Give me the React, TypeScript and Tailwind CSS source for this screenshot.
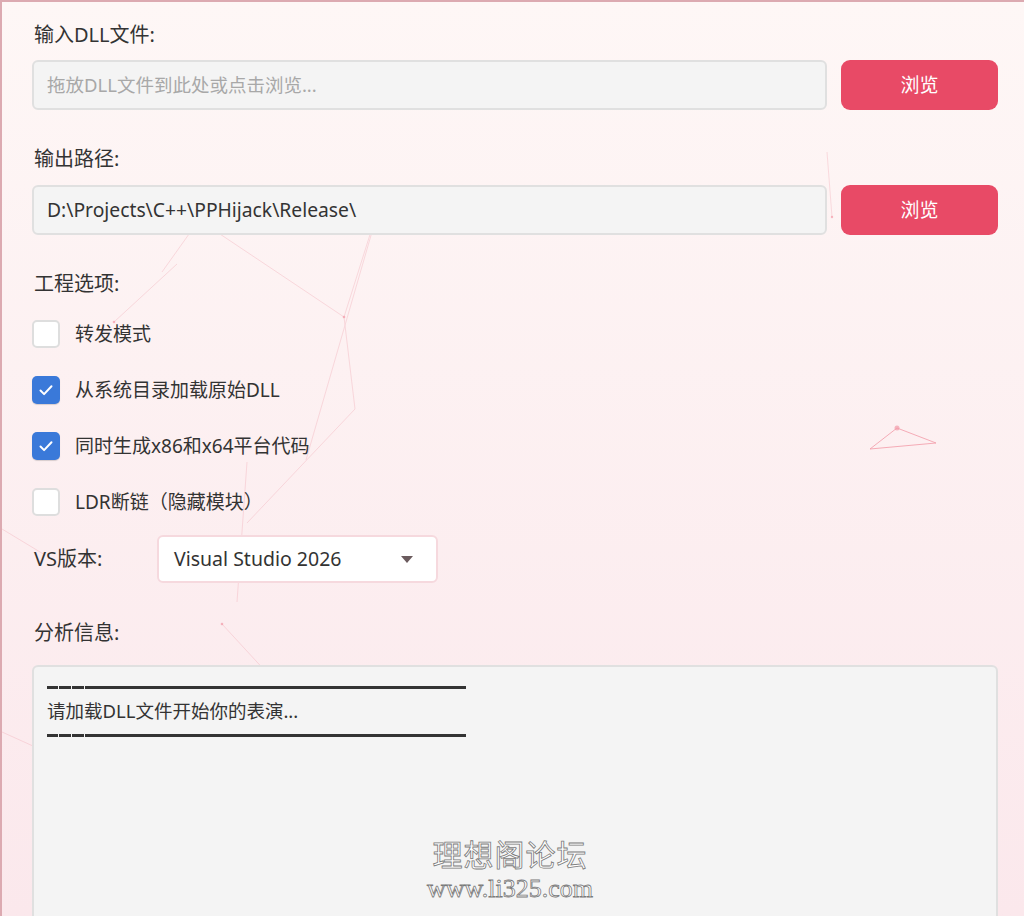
import React from "react";

const font = { fontFamily: '"Noto Sans", "Noto Sans CJK SC", sans-serif' };

function Check({ on }: { on: boolean }) {
  return on ? (
    <div className="w-[28px] h-[28px] rounded-[5px] bg-[#3a79d9] flex items-center justify-center shadow-[0_1px_1px_rgba(0,0,0,0.15)]">
      <svg width="18" height="18" viewBox="0 0 18 18" fill="none">
        <path d="M3.5 9.5l3.6 3.6L14.5 5.2" stroke="#fff" strokeWidth="2" strokeLinecap="round" strokeLinejoin="round" />
      </svg>
    </div>
  ) : (
    <div className="w-[28px] h-[28px] rounded-[5px] bg-white border-2 border-[#dedede]" />
  );
}

function Bar() {
  return (
    <div className="flex items-center gap-[1px] h-[24px]">
      <span className="w-[11px] h-[3px] bg-[#333]" />
      <span className="w-[12px] h-[3px] bg-[#333]" />
      <span className="w-[12px] h-[3px] bg-[#333]" />
      <span className="w-[381px] h-[3px] bg-[#333]" />
    </div>
  );
}

export default function App() {
  const options = [
    { label: "转发模式", on: false },
    { label: "从系统目录加载原始DLL", on: true },
    { label: "同时生成x86和x64平台代码", on: true },
    { label: "LDR断链（隐藏模块）", on: false },
  ];

  return (
    <div
      className="relative w-[1024px] h-[916px] overflow-hidden border-l-2 border-t-2 border-[#dcaab1] bg-gradient-to-b from-[#fef7f6] to-[#fbe8ec] text-[#333]"
      style={font}
    >
      {/* 背景粒子线 */}
      <svg className="absolute inset-0 pointer-events-none" width="1024" height="916">
        <g stroke="#f4b7c0" strokeWidth="1" fill="none" opacity="0.45">
          <line x1="825" y1="150" x2="830" y2="215" />
          <line x1="383" y1="185" x2="342" y2="315" />
          <line x1="383" y1="185" x2="304" y2="458" />
          <line x1="342" y1="315" x2="353" y2="407" />
          <line x1="353" y1="407" x2="245" y2="521" />
          <line x1="197" y1="218" x2="342" y2="315" />
          <line x1="197" y1="218" x2="160" y2="270" />
          <line x1="112" y1="320" x2="175" y2="262" />
          <line x1="245" y1="460" x2="235" y2="600" />
          <line x1="220" y1="622" x2="312" y2="722" />
          <line x1="312" y1="722" x2="438" y2="667" />
          <line x1="0" y1="730" x2="104" y2="777" />
          <line x1="0" y1="527" x2="43" y2="553" />
          <line x1="916" y1="824" x2="885" y2="916" />
        </g>
        <polygon points="895,426 868,447 934,441" stroke="#f29aa8" fill="none" opacity="0.8" />
        <g fill="#f29aa8" opacity="0.7">
          <circle cx="895" cy="426" r="2.5" />
          <circle cx="342" cy="315" r="1.3" />
          <circle cx="112" cy="320" r="1.3" />
          <circle cx="220" cy="622" r="1.3" />
          <circle cx="438" cy="667" r="1.3" />
          <circle cx="687" cy="780" r="1.3" />
          <circle cx="104" cy="777" r="1.3" />
          <circle cx="830" cy="215" r="1.2" />
        </g>
      </svg>

      <div className="relative pl-[30px] pr-[26px] pt-[21px]">
        <div className="h-[24px] leading-[24px] text-[20px] ml-[2px]">输入DLL文件:</div>
        <div className="mt-[13px] flex gap-[14px]">
          <div className="flex-1 h-[50px] rounded-[6px] bg-[#f4f4f4] border-2 border-[#e0e0e0] flex items-center px-[13px] text-[18.5px] text-[#a8a8a8]">
            拖放DLL文件到此处或点击浏览...
          </div>
          <button className="w-[157px] h-[50px] rounded-[9px] bg-[#e84a66] text-white text-[19px]">浏览</button>
        </div>

        <div className="mt-[37px] h-[24px] leading-[24px] text-[20px] ml-[2px]">输出路径:</div>
        <div className="mt-[14px] flex gap-[14px]">
          <div className="flex-1 h-[50px] rounded-[6px] bg-[#f4f4f4] border-2 border-[#e0e0e0] flex items-center px-[13px] text-[19.3px] text-[#333]">
            D:\Projects\C++\PPHijack\Release\
          </div>
          <button className="w-[157px] h-[50px] rounded-[9px] bg-[#e84a66] text-white text-[19px]">浏览</button>
        </div>

        <div className="mt-[37px] h-[24px] leading-[24px] text-[20px] ml-[2px]">工程选项:</div>
        <div className="mt-[24px] flex flex-col gap-[28px]">
          {options.map((o) => (
            <div key={o.label} className="flex items-center gap-[15px] h-[28px]">
              <Check on={o.on} />
              <span className="text-[19px]">{o.label}</span>
            </div>
          ))}
        </div>

        <div className="mt-[19px] flex items-center">
          <span className="w-[123px] ml-[2px] text-[20px]">VS版本:</span>
          <div className="w-[281px] h-[48px] rounded-[6px] bg-white border-2 border-[#f6d9de] flex items-center justify-between pl-[15px] pr-[23px] text-[19.5px] text-[#333]">
            <span>Visual Studio 2026</span>
            <svg width="12" height="7" viewBox="0 0 12 7">
              <path d="M0 0h12L6 7z" fill="#6b5b5e" />
            </svg>
          </div>
        </div>

        <div className="mt-[38px] h-[24px] leading-[24px] text-[20px] ml-[2px]">分析信息:</div>
        <div className="relative mt-[20px] h-[280px] rounded-[6px] bg-[#f4f4f4] border-2 border-[#e0e0e0] pl-[13px] pt-[8px] text-[18.5px] leading-[24px]">
          <Bar />
          <div>请加载DLL文件开始你的表演...</div>
          <Bar />
          <div className="absolute left-0 right-0 top-[171px] pr-[10px] flex flex-col items-center gap-[8px] text-white [-webkit-text-stroke:0.8px_#7a7a7a]">
            <span className="text-[30px] leading-[30px] tracking-[1px]" style={{ fontFamily: '"Noto Sans CJK SC", sans-serif' }}>
              理想阁论坛
            </span>
            <span className="text-[26px] leading-[26px]" style={{ fontFamily: '"Liberation Serif", serif' }}>
              www.li325.com
            </span>
          </div>
        </div>
      </div>
    </div>
  );
}
